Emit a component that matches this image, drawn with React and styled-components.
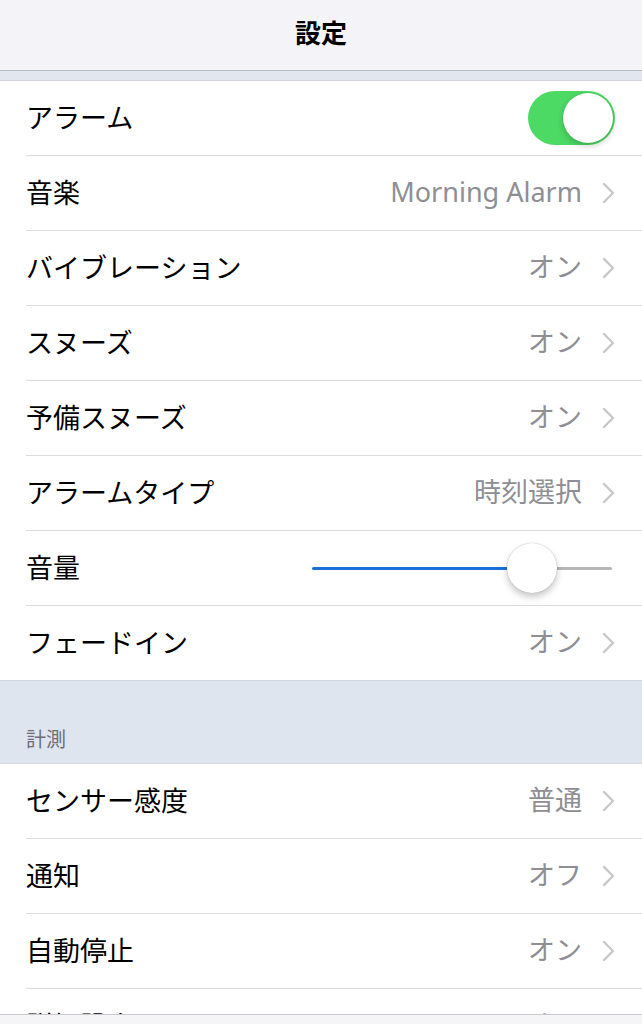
import React from "react";
import styled, { createGlobalStyle } from "styled-components";

const GlobalStyle = createGlobalStyle`
  html, body { margin: 0; padding: 0; background: #ffffff; }
  body {
    font-family: "Noto Sans", "Noto Sans CJK JP", sans-serif;
    -webkit-font-smoothing: antialiased;
    overflow: hidden;
  }
`;

const Page = styled.div`
  width: 642px;
  height: 1024px;
  overflow: hidden;
  position: relative;
  background: #ffffff;
`;

const NavBar = styled.header`
  height: 71px;
  box-sizing: border-box;
  padding-bottom: 6px;
  background: #f4f4f8;
  border-bottom: 1px solid #b9bbc1;
  display: flex;
  align-items: center;
  justify-content: center;
`;

const Title = styled.h1`
  margin: 0;
  font-family: "Noto Sans CJK JP", sans-serif;
  font-size: 26px;
  line-height: 1;
  font-weight: 700;
  color: #000;
`;

const Band = styled.div`
  height: 9px;
  background: #e1e6ef;
`;

const Section = styled.section`
  background: #ffffff;
  border-top: 1px solid #d3d6dc;
  border-bottom: 1px solid #d3d6dc;
`;

const Row = styled.div`
  padding-left: 26px;
`;

const RowBody = styled.div`
  height: ${(p) => (p.$last ? 74 : 75)}px;
  box-sizing: border-box;
  display: flex;
  align-items: center;
  padding-right: ${(p) => p.$pr ?? 27}px;
  border-bottom: ${(p) => (p.$last ? "none" : "1px solid #dcdce0")};
`;

const Label = styled.span`
  font-family: "Noto Sans CJK JP", sans-serif;
  font-size: 27px;
  line-height: 1;
  padding-bottom: 3px;
  color: #000;
  flex: 1;
  white-space: nowrap;
`;

const Value = styled.span`
  font-family: "Noto Sans", "Noto Sans CJK JP", sans-serif;
  font-size: 27px;
  line-height: 1;
  padding-bottom: 3px;
  color: #8e8e93;
  margin-right: 20px;
  white-space: nowrap;
`;

const ChevronIcon = () => (
  <svg width="13" height="22" viewBox="0 0 13 22" fill="none">
    <path d="M2 2 L11 11 L2 20" stroke="#c7c7cc" strokeWidth="2.4" strokeLinecap="round" strokeLinejoin="round" />
  </svg>
);

const Toggle = styled.div`
  width: 87px;
  height: 54px;
  border-radius: 27px;
  background: #4cd964;
  position: relative;
`;

const Knob = styled.div`
  position: absolute;
  right: 2px;
  top: 2px;
  width: 50px;
  height: 50px;
  border-radius: 50%;
  background: #fff;
  box-shadow: 0 3px 6px rgba(0, 0, 0, 0.2), 0 0 1px rgba(0, 0, 0, 0.2);
`;

const Slider = styled.div`
  width: 300px;
  height: 50px;
  position: relative;
  display: flex;
  align-items: center;
`;

const Track = styled.div`
  height: 3px;
  border-radius: 2px;
  background: ${(p) => p.$color};
`;

const Thumb = styled.div`
  position: absolute;
  top: 0;
  width: 50px;
  height: 50px;
  border-radius: 50%;
  background: #fff;
  box-shadow: 0 4px 7px rgba(0, 0, 0, 0.22), 0 0 1px rgba(0, 0, 0, 0.35);
`;

const SectionHeader = styled.div`
  height: 82px;
  background: #dfe5ee;
  display: flex;
  align-items: flex-end;
  padding: 0 26px 14px;
  box-sizing: border-box;
  font-family: "Noto Sans CJK JP", sans-serif;
  font-size: 20px;
  line-height: 1;
  color: #6d6d72;
`;

const BottomBar = styled.div`
  position: absolute;
  left: 0;
  right: 0;
  bottom: 0;
  height: 9px;
  background: #f5f5f7;
  border-top: 1px solid #c9c9ce;
`;

const NavRow = ({ label, value, last }) => (
  <Row>
    <RowBody $last={last}>
      <Label>{label}</Label>
      {value && <Value>{value}</Value>}
      <ChevronIcon />
    </RowBody>
  </Row>
);

const volume = 0.733;

export default function App() {
  return (
    <Page>
      <GlobalStyle />
      <NavBar>
        <Title>設定</Title>
      </NavBar>
      <Band />
      <Section>
        <Row>
          <RowBody>
            <Label>アラーム</Label>
            <Toggle>
              <Knob />
            </Toggle>
          </RowBody>
        </Row>
        <NavRow label="音楽" value="Morning Alarm" />
        <NavRow label="バイブレーション" value="オン" />
        <NavRow label="スヌーズ" value="オン" />
        <NavRow label="予備スヌーズ" value="オン" />
        <NavRow label="アラームタイプ" value="時刻選択" />
        <Row>
          <RowBody $pr={30}>
            <Label>音量</Label>
            <Slider>
              <Track $color="#1b6fd9" style={{ width: `${volume * 100}%` }} />
              <Track $color="#b6b6b8" style={{ flex: 1 }} />
              <Thumb style={{ left: `calc(${volume * 100}% - 25px)` }} />
            </Slider>
          </RowBody>
        </Row>
        <NavRow label="フェードイン" value="オン" last />
      </Section>
      <SectionHeader>計測</SectionHeader>
      <Section>
        <NavRow label="センサー感度" value="普通" />
        <NavRow label="通知" value="オフ" />
        <NavRow label="自動停止" value="オン" />
        <NavRow label="詳細設定" value="オン" last />
      </Section>
      <BottomBar />
    </Page>
  );
}
